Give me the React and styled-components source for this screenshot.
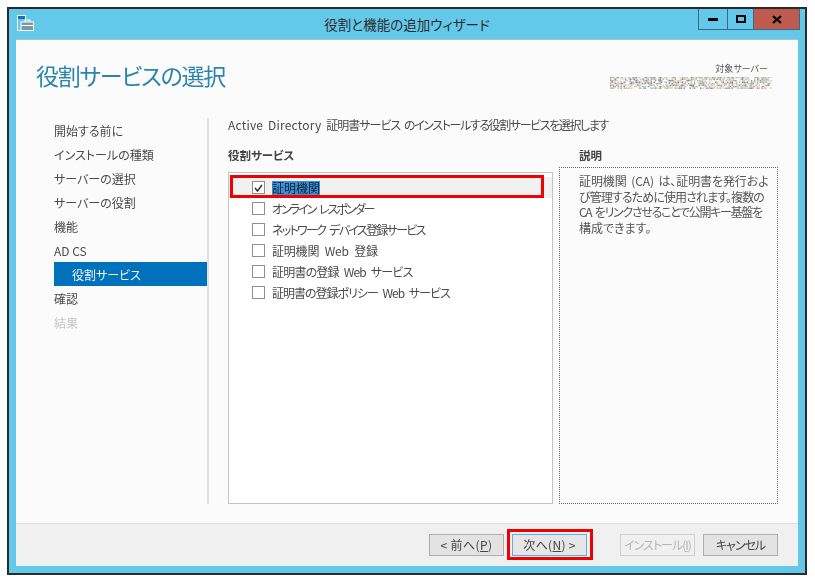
import React from 'react';
import styled, { createGlobalStyle } from 'styled-components';

const Global = createGlobalStyle`
  html, body { margin: 0; padding: 0; background: #fff; }
  body { font-family: "Noto Sans CJK JP", "Noto Sans", sans-serif; font-size: 12px; color: #4a4a4a; font-feature-settings: "palt"; }
`;
const Page = styled.div`width: 815px; height: 582px; padding: 7px 7px 0 7px; box-sizing: border-box; overflow: hidden;`;
const Frame = styled.div`
  position: relative; width: 800px; height: 568px; box-sizing: border-box;
  border: 2px solid #2b2b2b; background: #64c8eb; display: flex; flex-direction: column;
`;
const TitleBar = styled.div`height: 30px; display: flex; flex-shrink: 0; position: relative; align-items: center; justify-content: center;`;
const AppIcon = styled.svg`position: absolute; left: 8px; top: 6px;`;
const TitleText = styled.div`font-size: 13.5px; color: #2a2a2a; padding-bottom: 1px;`;
const Controls = styled.div`position: absolute; right: 5px; top: 0; display: flex; height: 20px; border: solid #3c6a7c; border-width: 0 1px 1px 1px;`;
const Ctl = styled.div`
  width: ${p => p.$w}px; height: 20px; display: flex; align-items: center; justify-content: center;
  background: ${p => p.$bg || 'transparent'}; border-left: ${p => p.$first ? 0 : '1px solid #3c6a7c'}; box-sizing: border-box;
`;
const Client = styled.div`
  flex: 1; margin: 0 7px 7px 7px; background: #fbfbfb; display: flex; flex-direction: column; min-height: 0;
  border-top: 1px solid #9cc4d4; filter: blur(0.3px);
`;
const Header = styled.div`height: 78px; flex-shrink: 0; display: flex; justify-content: space-between; padding: 0 28px 0 20px;`;
const Title = styled.h1`margin: 18px 0 0; font-size: 23px; line-height: 34px; font-weight: 400; color: #2a86ad; letter-spacing: -1.25px;`;
const Server = styled.div`display: flex; flex-direction: column; align-items: flex-end; padding-top: 23px;`;
const ServerLabel = styled.div`font-size: 9px; line-height: 12px; color: #555; margin-right: 2px;`;
const Noise = styled.svg`display: block; filter: blur(0.4px); margin-right: -2px; margin-top: 2px;`;
const Body = styled.div`flex: 1; display: flex; min-height: 0; padding-bottom: 19px;`;
const Nav = styled.nav`width: 193px; flex-shrink: 0; box-sizing: border-box; padding: 0 0 0 38px; border-right: 2px solid #e2e2e2; margin-right: 19px;`;
const NavItem = styled.div`
  height: 24px; line-height: 26px; width: 153px; box-sizing: border-box;
  padding-left: ${p => p.$sub ? 18 : 0}px;
  color: ${p => p.$active ? '#f2f8fc' : p.$off ? '#c6c6c6' : '#4a4a4a'};
  background: ${p => p.$active ? '#0072bc' : 'transparent'};
`;
const Main = styled.div`flex: 1; display: flex; flex-direction: column; min-width: 0;`;
const Intro = styled.div`height: 20px; line-height: 16px; margin-top: -1px; color: #4a4a4a; white-space: nowrap; word-spacing: 2px;`;
const Tight = styled.span`letter-spacing: ${p => p.$t}px;`;
const Columns = styled.div`flex: 1; display: flex; min-height: 0; margin-top: 10px;`;
const ListCol = styled.div`width: 331px; flex-shrink: 0; display: flex; flex-direction: column;`;
const ColLabel = styled.div`font-weight: 700; line-height: 16px; height: 16px; color: #444; font-size: 11.5px;`;
const ListBox = styled.div`flex: 1; width: 325px; margin: 9px 0 0 0; box-sizing: border-box; border: 1px solid #c4c4c4; background: #fff; padding-top: 4px;`;
const Row = styled.div`height: 21px; display: flex; align-items: center; padding-left: 23px; background: ${p => p.$on ? '#f1f1f1' : 'transparent'};`;
const Box = styled.span`
  width: 13px; height: 13px; border: 1px solid #8f8f8f; box-sizing: border-box; background: #fff; margin-right: 7px;
  display: flex; align-items: center; justify-content: center; flex-shrink: 0;
`;
const RowText = styled.span`line-height: 14px; white-space: nowrap; word-spacing: 3px; letter-spacing: ${p => p.$t || 0}px; ${p => p.$sel ? 'background: #3b8fd6; color: #123;' : ''}`;
const DescCol = styled.div`width: 220px; flex-shrink: 0; display: flex; flex-direction: column;`;
const DescLabel = styled.div`font-weight: 700; font-size: 11.5px; line-height: 16px; height: 16px; color: #444; padding-left: 20px; margin-bottom: 4px;`;
const DescBox = styled.div`
  flex: 1; border: 1px dotted #666; padding: 5px 0 0 19px; box-sizing: border-box; color: #555; margin-right: 1px;
`;
const DescLine = styled.div`line-height: 15.5px; white-space: nowrap; word-spacing: 2px; letter-spacing: ${p => p.$t}px;`;
const Footer = styled.div`height: 43px; flex-shrink: 0; background: #f0f0f0; border-top: 1px solid #dfdfdf; box-sizing: border-box; display: flex; align-items: flex-start; padding: 10px 20px 0 0; justify-content: flex-end;`;
const Btn = styled.button`
  height: 22px; width: 75px; margin-left: ${p => p.$gap}px; padding: 0; box-sizing: border-box; font: inherit; font-size: 12px; line-height: 18px; white-space: nowrap;
  letter-spacing: ${p => p.$t || 0}px;
  background: ${p => p.$off ? '#f0f0f0' : p.$primary ? '#e6e6e6' : '#e3e3e3'}; color: ${p => p.$off ? '#b5b5b5' : '#444'};
  border: 1px solid ${p => p.$primary ? '#66a7e8' : p.$off ? '#cfcfcf' : '#adadad'};
  u { text-underline-offset: 1px; }
`;
const RedBox = styled.div`
  position: absolute; left: ${p => p.$x}px; top: ${p => p.$y}px; width: ${p => p.$w}px; height: ${p => p.$h}px;
  border: 3px solid #f00000; box-sizing: border-box; pointer-events: none;
`;

const noiseColors = ['#a89c8a', '#c4b8a2', '#a9b5c6', '#e0d8c8', '#bcc6cf', '#8f8a84', '#ece4d2', '#f5f2ea', '#fbfbfb', '#fbfbfb', '#fbfbfb', '#d6c7ac', '#b6d0e4'];
const hash = (a, b) => {
  const v = Math.sin(a * 12.9898 + b * 78.233) * 43758.5453;
  return v - Math.floor(v);
};
const noise = [];
for (let y = 0; y < 8; y++) {
  for (let x = 0; x < 108; x++) {
    noise.push([x * 1.5, y * 1.5, noiseColors[Math.floor(hash(x, y) * noiseColors.length)]]);
  }
}
const items = [
  { text: 'オンライン レスポンダー', t: -2 },
  { text: 'ネットワーク デバイス登録サービス', t: -1.7 },
  { text: '証明機関 Web 登録', t: -0.2 },
  { text: '証明書の登録 Web サービス', t: -0.8 },
  { text: '証明書の登録ポリシー Web サービス', t: -1 },
];

export default function App() {
  return (
    <Page>
      <Global />
      <Frame>
        <TitleBar>
          <AppIcon width="18" height="17" viewBox="0 0 18 17">
            <rect x="0.5" y="0.5" width="8" height="15" fill="#64c8eb" stroke="#fff" />
            <rect x="1" y="1" width="7" height="3" fill="#1b6fb5" />
            <rect x="4" y="7" width="12.5" height="8.5" fill="#7d96a8" stroke="#fff" />
            <path d="M8 7V5h5v2M4 10.5h12.5" fill="none" stroke="#fff" />
          </AppIcon>
          <TitleText>役割と機能の追加ウィザード</TitleText>
          <Controls>
            <Ctl $w={28} $first><svg width="10" height="3"><rect width="10" height="3" y="0" fill="#000" /></svg></Ctl>
            <Ctl $w={26}><svg width="10" height="8"><rect x="1" y="1" width="8" height="6" fill="none" stroke="#000" strokeWidth="2" /></svg></Ctl>
            <Ctl $w={46} $bg="#bf5a50"><svg width="10" height="9"><path d="M1 1l8 7M9 1l-8 7" stroke="#000" strokeWidth="2.2" /></svg></Ctl>
          </Controls>
        </TitleBar>
        <Client>
          <Header>
            <Title>役割サービスの選択</Title>
            <Server>
              <ServerLabel>対象サーバー</ServerLabel>
              <Noise width="162" height="12" viewBox="0 0 162 12">
                {noise.map(([x, y, c], i) => <rect key={i} x={x} y={y} width="1.5" height="1.5" fill={c} />)}
              </Noise>
            </Server>
          </Header>
          <Body>
            <Nav>
              <NavItem>開始する前に</NavItem>
              <NavItem>インストールの種類</NavItem>
              <NavItem>サーバーの選択</NavItem>
              <NavItem>サーバーの役割</NavItem>
              <NavItem>機能</NavItem>
              <NavItem>AD CS</NavItem>
              <NavItem $sub $active>役割サービス</NavItem>
              <NavItem>確認</NavItem>
              <NavItem $off>結果</NavItem>
            </Nav>
            <Main>
              <Intro>
                <Tight $t={0.2}>Active Directory </Tight>
                <Tight $t={-1}>証明書サービス </Tight>
                <Tight $t={-1.4}>のインストールする役割サービスを選択します</Tight>
              </Intro>
              <Columns>
                <ListCol>
                  <ColLabel>役割サービス</ColLabel>
                  <ListBox>
                    <Row $on>
                      <Box><svg width="9" height="8" viewBox="0 0 9 8"><path d="M1 4l2.5 3L8 1" fill="none" stroke="#333" strokeWidth="1.5" /></svg></Box>
                      <RowText $sel>証明機関</RowText>
                    </Row>
                    {items.map(({ text, t }) => (
                      <Row key={text}><Box /><RowText $t={t}>{text}</RowText></Row>
                    ))}
                  </ListBox>
                </ListCol>
                <DescCol>
                  <DescLabel>説明</DescLabel>
                  <DescBox>
                    <DescLine $t={-0.1}>証明機関 (CA) は、証明書を発行およ</DescLine>
                    <DescLine $t={-0.9}>び管理するために使用されます。複数の</DescLine>
                    <DescLine $t={-1.3}>CA をリンクさせることで公開キー基盤を</DescLine>
                    <DescLine $t={0}>構成できます。</DescLine>
                  </DescBox>
                </DescCol>
              </Columns>
            </Main>
          </Body>
          <Footer>
            <Btn $t={0.4}>&lt; 前へ(<u>P</u>)</Btn>
            <Btn $primary $gap={8} $t={0.3}>次へ(<u>N</u>) &gt;</Btn>
            <Btn $off $gap={33} $t={-1}>インストール(<u>I</u>)</Btn>
            <Btn $gap={8} $t={-1}>キャンセル</Btn>
          </Footer>
        </Client>
        <RedBox $x={221} $y={166} $w={314} $h={23} />
        <RedBox $x={498} $y={520} $w={86} $h={31} />
      </Frame>
    </Page>
  );
}
